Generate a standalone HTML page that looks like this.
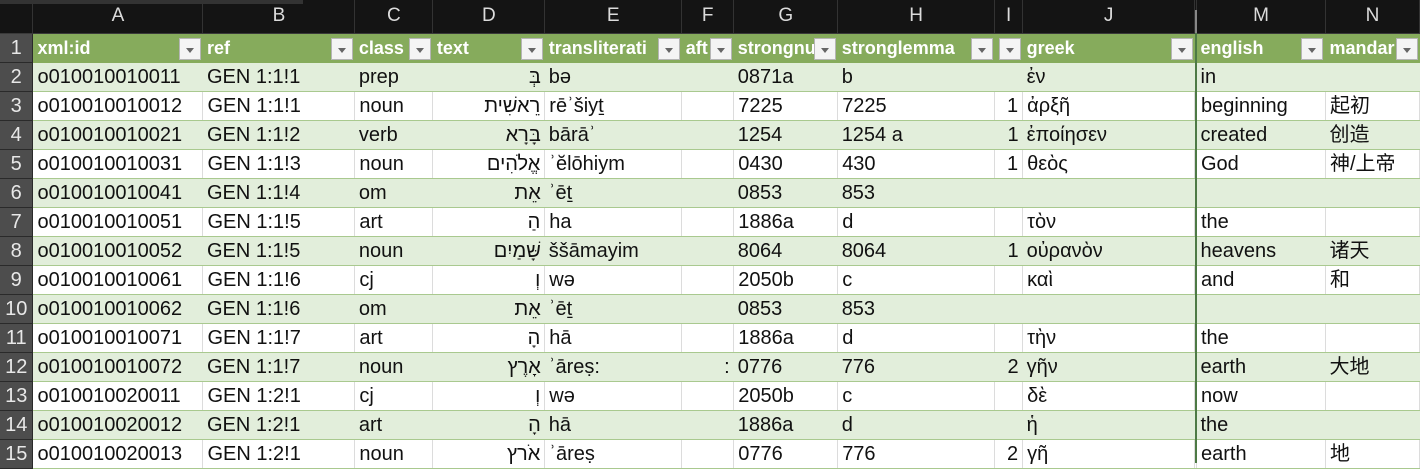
<!DOCTYPE html>
<html><head><meta charset="utf-8">
<style>
*{margin:0;padding:0;box-sizing:border-box}
body{width:1420px;height:463px;overflow:hidden;background:#fff;font-family:"Liberation Sans","Noto Sans CJK SC",sans-serif;position:relative}
table{border-collapse:collapse;table-layout:fixed;position:absolute;left:0;top:0}
td{height:29px;font-size:20px;color:#111;white-space:nowrap;overflow:hidden;padding:0 4px;border-bottom:1px solid #a9c98f;vertical-align:middle;line-height:28px}
tr.ch td{height:33px;background:#141414;color:#dcdcdc;text-align:center;font-size:19px;border-bottom:1px solid #3a3a3a;border-right:1px solid #333}
td.rn{background:#4d4d4d !important;color:#e8e8e8 !important;text-align:center;padding:0 !important;border-right:1px solid #2a2a2a !important;border-bottom:1px solid #2a2a2a !important;font-size:20px !important;font-weight:normal !important}
tr.hd td{background:#86ab5c;color:#fff;font-weight:bold;position:relative;border-bottom:1px solid #86ab5c;font-size:18px}
tr.g td{background:#e2eedb}
tr.w td{background:#fff;border-right:1px solid #dcdcdc}
.r{text-align:right}
.fb{position:absolute;right:2px;top:4px;width:22px;height:22px;background:#f4f4f4;border:1px solid #b5b5b5}
.fb:after{content:"";position:absolute;left:6px;top:9px;border-left:4px solid transparent;border-right:4px solid transparent;border-top:5px solid #666}
.frz{position:absolute;left:1195px;top:33px;width:2px;height:430px;background:#4d7a45}
.frzh{position:absolute;left:1195px;top:10px;width:2px;height:23px;background:#888}
.topbar{position:absolute;left:0;top:0;width:303px;height:4px;background:#333}
</style></head><body>
<table>
<colgroup><col style="width:33px"><col style="width:170px"><col style="width:152px"><col style="width:78px"><col style="width:112px"><col style="width:137px"><col style="width:52px"><col style="width:104px"><col style="width:157px"><col style="width:28px"><col style="width:172px"><col style="width:2px"><col style="width:129px"><col style="width:94px"></colgroup>
<tr class="ch"><td style="background:#141414"></td><td>A</td><td>B</td><td>C</td><td>D</td><td>E</td><td>F</td><td>G</td><td>H</td><td>I</td><td>J</td><td style="padding:0"></td><td>M</td><td>N</td></tr>
<tr class="hd"><td class="rn">1</td><td>xml:id<span class="fb"></span></td><td>ref<span class="fb"></span></td><td>class<span class="fb"></span></td><td>text<span class="fb"></span></td><td>transliterati<span class="fb"></span></td><td>aft<span class="fb"></span></td><td>strongnu<span class="fb"></span></td><td>stronglemma<span class="fb"></span></td><td><span class="fb"></span></td><td>greek<span class="fb"></span></td><td style="padding:0"></td><td>english<span class="fb"></span></td><td>mandar<span class="fb"></span></td></tr>
<tr class="g"><td class="rn">2</td><td>o010010010011</td><td>GEN 1:1!1</td><td>prep</td><td class="r">בְּ</td><td>bə</td><td></td><td>0871a</td><td>b</td><td></td><td>ἐν</td><td style="padding:0"></td><td>in</td><td></td></tr>
<tr class="w"><td class="rn">3</td><td>o010010010012</td><td>GEN 1:1!1</td><td>noun</td><td class="r">רֵאשִׁית</td><td>rēʾšiyṯ</td><td></td><td>7225</td><td>7225</td><td class="r">1</td><td>ἀρξῆ</td><td style="padding:0"></td><td>beginning</td><td>起初</td></tr>
<tr class="g"><td class="rn">4</td><td>o010010010021</td><td>GEN 1:1!2</td><td>verb</td><td class="r">בָּרָא</td><td>bārāʾ</td><td></td><td>1254</td><td>1254 a</td><td class="r">1</td><td>ἐποίησεν</td><td style="padding:0"></td><td>created</td><td>创造</td></tr>
<tr class="w"><td class="rn">5</td><td>o010010010031</td><td>GEN 1:1!3</td><td>noun</td><td class="r">אֱלֹהִים</td><td>ʾĕlōhiym</td><td></td><td>0430</td><td>430</td><td class="r">1</td><td>θεὸς</td><td style="padding:0"></td><td>God</td><td>神/上帝</td></tr>
<tr class="g"><td class="rn">6</td><td>o010010010041</td><td>GEN 1:1!4</td><td>om</td><td class="r">אֵת</td><td>ʾēṯ</td><td></td><td>0853</td><td>853</td><td></td><td></td><td style="padding:0"></td><td></td><td></td></tr>
<tr class="w"><td class="rn">7</td><td>o010010010051</td><td>GEN 1:1!5</td><td>art</td><td class="r">הַ</td><td>ha</td><td></td><td>1886a</td><td>d</td><td></td><td>τὸν</td><td style="padding:0"></td><td>the</td><td></td></tr>
<tr class="g"><td class="rn">8</td><td>o010010010052</td><td>GEN 1:1!5</td><td>noun</td><td class="r">שָּׁמַיִם</td><td>ššāmayim</td><td></td><td>8064</td><td>8064</td><td class="r">1</td><td>οὐρανὸν</td><td style="padding:0"></td><td>heavens</td><td>诸天</td></tr>
<tr class="w"><td class="rn">9</td><td>o010010010061</td><td>GEN 1:1!6</td><td>cj</td><td class="r">וְ</td><td>wə</td><td></td><td>2050b</td><td>c</td><td></td><td>καὶ</td><td style="padding:0"></td><td>and</td><td>和</td></tr>
<tr class="g"><td class="rn">10</td><td>o010010010062</td><td>GEN 1:1!6</td><td>om</td><td class="r">אֵת</td><td>ʾēṯ</td><td></td><td>0853</td><td>853</td><td></td><td></td><td style="padding:0"></td><td></td><td></td></tr>
<tr class="w"><td class="rn">11</td><td>o010010010071</td><td>GEN 1:1!7</td><td>art</td><td class="r">הָ</td><td>hā</td><td></td><td>1886a</td><td>d</td><td></td><td>τὴν</td><td style="padding:0"></td><td>the</td><td></td></tr>
<tr class="g"><td class="rn">12</td><td>o010010010072</td><td>GEN 1:1!7</td><td>noun</td><td class="r">אָרֶץ</td><td>ʾāreṣ:</td><td class="r">:</td><td>0776</td><td>776</td><td class="r">2</td><td>γῆν</td><td style="padding:0"></td><td>earth</td><td>大地</td></tr>
<tr class="w"><td class="rn">13</td><td>o010010020011</td><td>GEN 1:2!1</td><td>cj</td><td class="r">וְ</td><td>wə</td><td></td><td>2050b</td><td>c</td><td></td><td>δὲ</td><td style="padding:0"></td><td>now</td><td></td></tr>
<tr class="g"><td class="rn">14</td><td>o010010020012</td><td>GEN 1:2!1</td><td>art</td><td class="r">הָ</td><td>hā</td><td></td><td>1886a</td><td>d</td><td></td><td>ἡ</td><td style="padding:0"></td><td>the</td><td></td></tr>
<tr class="w"><td class="rn">15</td><td>o010010020013</td><td>GEN 1:2!1</td><td>noun</td><td class="r">אֹרץ</td><td>ʾāreṣ</td><td></td><td>0776</td><td>776</td><td class="r">2</td><td>γῆ</td><td style="padding:0"></td><td>earth</td><td>地</td></tr>
</table>
<div class="topbar"></div>
<div class="frzh"></div>
<div class="frz"></div>
</body></html>
